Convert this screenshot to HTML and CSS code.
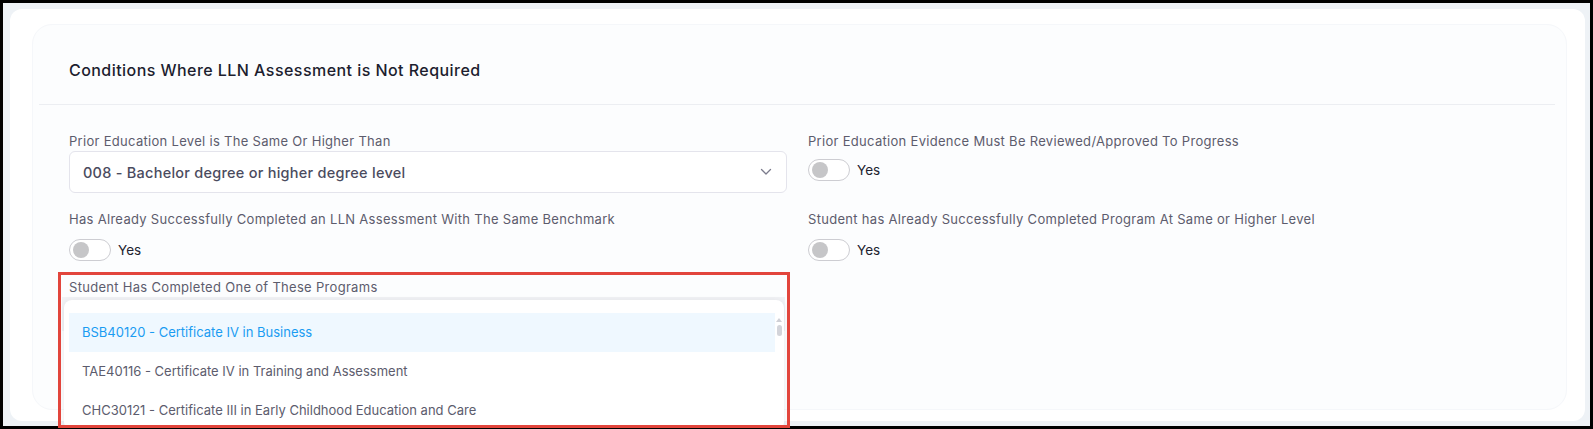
FILE: index.html
```html
<!DOCTYPE html>
<html lang="en">
<head>
  <meta charset="UTF-8">
  <meta name="viewport" content="width=device-width, initial-scale=1">
  <title>LLN Assessment Conditions</title>
  <link rel="stylesheet" href="styles.css">
</head>
<body>

  <div class="page">
    <div class="panel">
      <div class="card">
        <div class="card-header">
          <h3>Conditions Where LLN Assessment is Not Required</h3>
        </div>

        <div class="card-body">
          <div class="field">
            <label>Prior Education Level is The Same Or Higher Than</label>
            <div class="select">
              <span>008 - Bachelor degree or higher degree level</span>
              <svg class="chevron" width="12" height="8" viewBox="0 0 12 8">
                <path d="M1.5 1.5 L6 6 L10.5 1.5" fill="none" stroke="#7b7b8c" stroke-width="1.3" stroke-linecap="round" stroke-linejoin="round"/>
              </svg>
            </div>
          </div>

          <div class="field">
            <label>Prior Education Evidence Must Be Reviewed/Approved To Progress</label>
            <div class="switch-row tight">
              <span class="switch"><span class="knob"></span></span>
              <span class="switch-text">Yes</span>
            </div>
          </div>

          <div class="field">
            <label>Has Already Successfully Completed an LLN Assessment With The Same Benchmark</label>
            <div class="switch-row">
              <span class="switch"><span class="knob"></span></span>
              <span class="switch-text">Yes</span>
            </div>
          </div>

          <div class="field">
            <label>Student has Already Successfully Completed Program At Same or Higher Level</label>
            <div class="switch-row">
              <span class="switch"><span class="knob"></span></span>
              <span class="switch-text">Yes</span>
            </div>
          </div>

          <div class="field programs">
            <label>Student Has Completed One of These Programs</label>
            <div class="multi-input"></div>

            <div class="dropdown">
              <ul>
                <li class="active">BSB40120 - Certificate IV in Business</li>
                <li>TAE40116 - Certificate IV in Training and Assessment</li>
                <li>CHC30121 - Certificate III in Early Childhood Education and Care</li>
              </ul>
              <div class="scrollbar">
                <span class="arrow"></span>
                <span class="thumb"></span>
              </div>
            </div>
          </div>
        </div>
      </div>
    </div>
  </div>

  <div class="highlight-box"></div>

</body>
</html>
```

FILE: styles.css
```css
body {
  margin: 0;
  height: 429px;
  padding: 3px;
  box-sizing: border-box;
  background: #000;
  font-family: "Inter", "Noto Sans", sans-serif;
  position: relative;
  overflow: hidden;
}
.page {
  height: 100%;
  background: #eef2f6;
  padding: 6px 5px 4px 7px;
  box-sizing: border-box;
  overflow: hidden;
}
.panel {
  height: 412px;
  background: #fff;
  border-radius: 12px;
  padding: 15px 18px 11px 22px;
  box-sizing: border-box;
}
.card {
  height: 100%;
  background: #fcfdfe;
  border: 1px solid #f5f7fa;
  border-radius: 20px;
  box-sizing: border-box;
  padding: 0 11px 0 6px;
}
.card-header {
  padding: 34px 30px 23px;
  border-bottom: 1px solid #eceef2;
}
.card-header h3 {
  margin: 0;
  font-size: 16px;
  line-height: 22px;
  font-weight: 500;
  letter-spacing: 0.45px;
  color: #1d1e2f;
}
.card-body {
  display: grid;
  grid-template-columns: 1fr 1fr;
  column-gap: 21px;
  row-gap: 16px;
  padding: 26px 29px 0 30px;
  align-items: start;
}
.field label {
  display: block;
  font-size: 13px;
  line-height: 20px;
  letter-spacing: 0.3px;
  color: #5c5c6d;
}
.select {
  display: flex;
  align-items: center;
  justify-content: space-between;
  height: 42px;
  box-sizing: border-box;
  border: 1px solid #e4e4ec;
  border-radius: 6px;
  background: #fff;
  padding: 0 14px 0 13px;
  font-size: 14.5px;
  font-weight: 500;
  letter-spacing: 0.25px;
  color: #4a4b5e;
}
.switch-row {
  display: flex;
  align-items: center;
  gap: 7px;
  margin-top: 10px;
}
.switch-row.tight {
  margin-top: 8px;
}
.switch {
  width: 42px;
  height: 22px;
  box-sizing: border-box;
  border: 1px solid #cdcdd2;
  border-radius: 11px;
  background: #fff;
  display: flex;
  align-items: center;
  padding-left: 3px;
}
.knob {
  width: 16px;
  height: 16px;
  border-radius: 50%;
  background: #c6c6c8;
}
.switch-text {
  font-size: 13.5px;
  color: #222330;
}
.programs {
  position: relative;
}
.multi-input {
  height: 34px;
  margin: 0 2px 0 -7px;
  background: #f1f2f5;
}
.dropdown {
  position: absolute;
  top: 23px;
  left: -5px;
  right: 3px;
  background: #fff;
  border-radius: 8px;
  box-shadow: 0 1px 6px rgba(40, 45, 70, 0.09);
  padding: 13px 1px 0 5px;
  display: flex;
}
.dropdown ul {
  list-style: none;
  margin: 0;
  padding: 0;
  flex: 1;
}
.dropdown li {
  height: 39px;
  line-height: 39px;
  padding-left: 13px;
  font-size: 13px;
  color: #5c5c6d;
}
.dropdown li.active {
  background: #eff8ff;
  color: #1a9cf2;
}
.scrollbar {
  width: 8px;
  padding-top: 5px;
  display: flex;
  flex-direction: column;
  align-items: center;
  gap: 3px;
}
.arrow {
  width: 0;
  height: 0;
  border-left: 3px solid transparent;
  border-right: 3px solid transparent;
  border-bottom: 4px solid #cfd0d6;
}
.thumb {
  width: 5px;
  height: 11px;
  border-radius: 3px;
  background: #d3d4da;
}
.highlight-box {
  position: absolute;
  left: 58px;
  top: 272px;
  width: 732px;
  height: 156px;
  border: 3px solid #e2453c;
  box-sizing: border-box;
}
```
